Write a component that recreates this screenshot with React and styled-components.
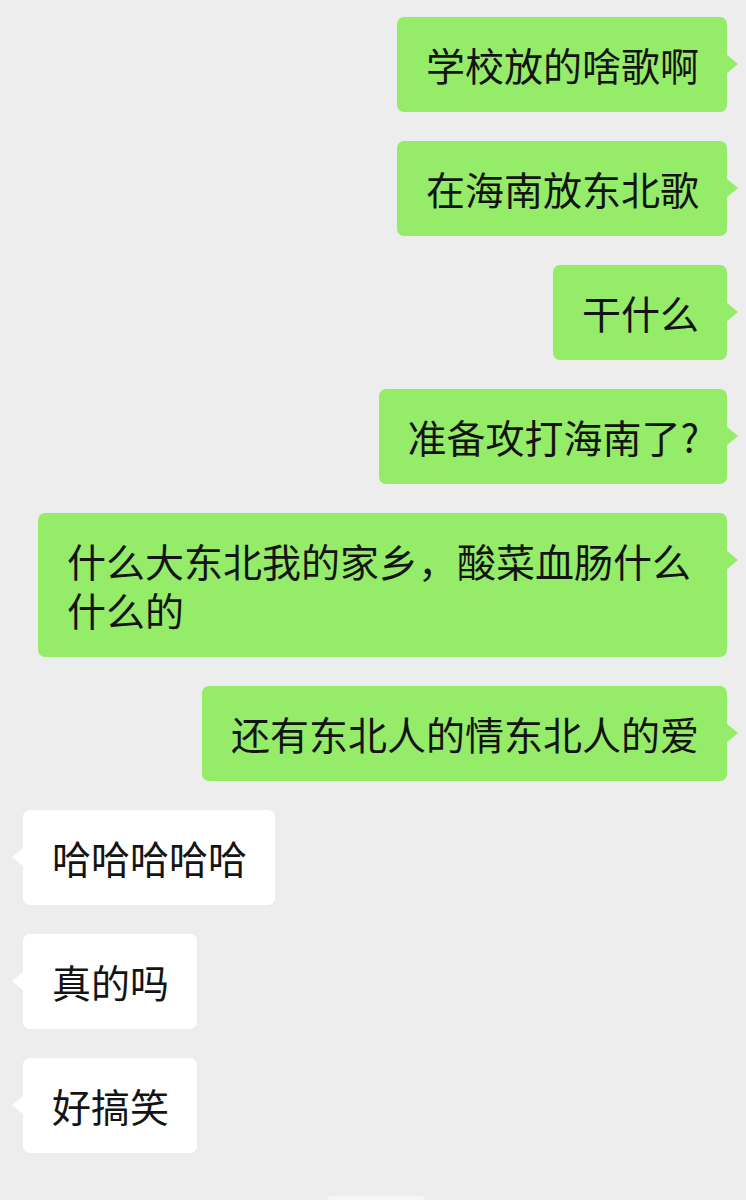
import React from 'react';
import styled, { createGlobalStyle } from 'styled-components';

const GlobalStyle = createGlobalStyle`
  html, body {
    margin: 0;
    padding: 0;
    background: #ededed;
  }
  body {
    font-family: "Noto Sans CJK SC", "Noto Sans", sans-serif;
  }
`;

const messages = [
  { mine: true, text: '学校放的啥歌啊' },
  { mine: true, text: '在海南放东北歌' },
  { mine: true, text: '干什么' },
  { mine: true, text: '准备攻打海南了?' },
  { mine: true, text: '什么大东北我的家乡，酸菜血肠什么什么的' },
  { mine: true, text: '还有东北人的情东北人的爱' },
  { mine: false, text: '哈哈哈哈哈' },
  { mine: false, text: '真的吗' },
  { mine: false, text: '好搞笑' },
];

export default function App() {
  return (
    <>
      <GlobalStyle />
      <Chat>
        {messages.map((m, i) => (
          <Row key={i} $mine={m.mine}>
            <Bubble $mine={m.mine}>{m.text}</Bubble>
          </Row>
        ))}
        <TimeRow>
          <TimePill />
        </TimeRow>
      </Chat>
    </>
  );
}

const Chat = styled.div`
  display: flex;
  flex-direction: column;
  gap: 29px;
  padding-top: 17px;
  height: 1200px;
  box-sizing: border-box;
  overflow: hidden;
`;

const Row = styled.div`
  display: flex;
  justify-content: ${p => (p.$mine ? 'flex-end' : 'flex-start')};
  padding: ${p => (p.$mine ? '0 19px 0 0' : '0 0 0 23px')};
`;

const Bubble = styled.div`
  position: relative;
  max-width: 689px;
  box-sizing: border-box;
  padding: 23px 28px 23px 29px;
  border-radius: 7px;
  background: ${p => (p.$mine ? '#95ec69' : '#ffffff')};
  color: #141414;
  font-size: 39px;
  line-height: 49px;
  word-break: break-all;

  &::after {
    content: '';
    position: absolute;
    top: 37px;
    ${p => (p.$mine ? 'right: -11px;' : 'left: -11px;')}
    border-top: 10px solid transparent;
    border-bottom: 10px solid transparent;
    ${p =>
      p.$mine
        ? 'border-left: 12px solid #95ec69;'
        : 'border-right: 12px solid #ffffff;'}
  }
`;

const TimeRow = styled.div`
  display: flex;
  padding-left: 327px;
  margin-top: 14px;
`;

const TimePill = styled.div`
  width: 98px;
  height: 30px;
  border-radius: 4px;
  background: #f6f6f6;
`;
